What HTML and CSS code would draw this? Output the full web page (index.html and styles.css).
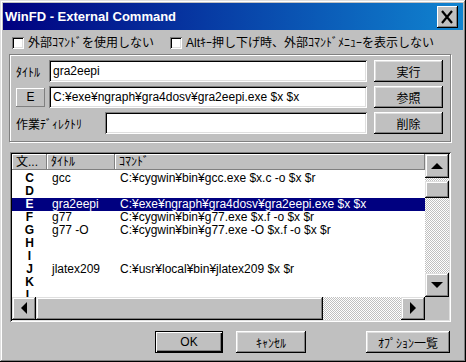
FILE: index.html
```html
<!DOCTYPE html>
<html lang="ja">
<head>
    <meta charset="UTF-8">
    <title>WinFD - External Command</title>
    <link rel="stylesheet" href="styles.css">
</head>
<body>
    <div class="window">
        <div class="titlebar">
            <span class="title">WinFD - External Command</span>
            <span class="close">
                <svg width="21" height="22" viewBox="0 0 21 22"><path d="M5 5 L15 17 M15 5 L5 17" stroke="#000" stroke-width="2.2" fill="none"/></svg>
            </span>
        </div>

        <div class="options">
            <label class="check"><span class="box"></span>外部ｺﾏﾝﾄﾞを使用しない</label>
            <label class="check"><span class="box"></span>Altｷｰ押し下げ時、外部ｺﾏﾝﾄﾞﾒﾆｭｰを表示しない</label>
        </div>

        <div class="group">
            <div class="field">
                <span class="label label-title">ﾀｲﾄﾙ</span>
                <div class="input">gra2eepi</div>
                <button class="btn">実行</button>
            </div>
            <div class="field">
                <span class="key">E</span>
                <div class="input">C:¥exe¥ngraph¥gra4dosv¥gra2eepi.exe $x $x</div>
                <button class="btn">参照</button>
            </div>
            <div class="field">
                <span class="label label-dir">作業ﾃﾞｨﾚｸﾄﾘ</span>
                <div class="input"></div>
                <button class="btn">削除</button>
            </div>
        </div>

        <div class="list">
            <div class="view">
                <div class="header">
                    <span class="head">文...</span>
                    <span class="head">ﾀｲﾄﾙ</span>
                    <span class="head">ｺﾏﾝﾄﾞ</span>
                </div>
                <div class="rows">
                    <div class="row"><span class="key-col">C</span><span>gcc</span><span>C:¥cygwin¥bin¥gcc.exe $x.c -o $x $r</span></div>
                    <div class="row"><span class="key-col">D</span><span></span><span></span></div>
                    <div class="row selected"><span class="key-col">E</span><span>gra2eepi</span><span>C:¥exe¥ngraph¥gra4dosv¥gra2eepi.exe $x $x</span></div>
                    <div class="row"><span class="key-col">F</span><span>g77</span><span>C:¥cygwin¥bin¥g77.exe $x.f -o $x $r</span></div>
                    <div class="row"><span class="key-col">G</span><span>g77 -O</span><span>C:¥cygwin¥bin¥g77.exe -O $x.f -o $x $r</span></div>
                    <div class="row"><span class="key-col">H</span><span></span><span></span></div>
                    <div class="row"><span class="key-col">I</span><span></span><span></span></div>
                    <div class="row"><span class="key-col">J</span><span>jlatex209</span><span>C:¥usr¥local¥bin¥jlatex209 $x $r</span></div>
                    <div class="row"><span class="key-col">K</span><span></span><span></span></div>
                    <div class="row"><span class="key-col">L</span><span></span><span></span></div>
                </div>
            </div>
            <div class="vscroll">
                <span class="arrow"><svg width="24" height="24"><polygon points="6,15 18,15 12,9"/></svg></span>
                <span class="thumb vthumb"></span>
                <span class="track"></span>
                <span class="arrow"><svg width="24" height="24"><polygon points="6,9 18,9 12,15"/></svg></span>
            </div>
            <div class="hscroll">
                <span class="arrow"><svg width="24" height="23"><polygon points="15,5 15,17 9,11"/></svg></span>
                <span class="thumb hthumb"></span>
                <span class="track"></span>
                <span class="arrow"><svg width="24" height="23"><polygon points="9,5 9,17 15,11"/></svg></span>
            </div>
            <div class="corner"></div>
        </div>

        <div class="footer">
            <button class="btn btn-ok default">OK</button>
            <button class="btn btn-cancel">ｷｬﾝｾﾙ</button>
            <button class="btn btn-options">ｵﾌﾟｼｮﾝ一覧</button>
        </div>
    </div>
</body>
</html>
```

FILE: styles.css
```css
* {
    box-sizing: border-box;
}
body {
    margin: 0;
    background: #c0c0c0;
    font-family: "Liberation Sans", "Noto Sans CJK JP", sans-serif;
    font-size: 12px;
    color: #000;
}
.window {
    width: 466px;
    height: 362px;
    padding: 3px;
    background: #c0c0c0;
    box-shadow: inset -1px -1px #000, inset 1px 1px #dfdfdf, inset -2px -2px #808080, inset 2px 2px #fff;
}
.titlebar {
    height: 27px;
    display: flex;
    align-items: center;
    justify-content: space-between;
    padding: 0 5px 0 2px;
    background: linear-gradient(to right, #000080, #1084d0);
}
.title {
    color: #fff;
    font-weight: bold;
    font-size: 13px;
}
.close {
    width: 21px;
    height: 22px;
    display: flex;
    background: #c0c0c0;
    box-shadow: inset -1px -1px #000, inset 1px 1px #fff, inset -2px -2px #808080;
}

/* checkboxes */
.options {
    display: flex;
    align-items: center;
    height: 12px;
    margin: 7px 0 0 9px;
    line-height: 12px;
}
.check {
    display: flex;
    align-items: center;
    gap: 4px;
    margin-right: 16px;
    white-space: nowrap;
}
.box {
    width: 12px;
    height: 12px;
    background: #fff;
    box-shadow: inset 1px 1px #808080, inset -1px -1px #fff, inset 2px 2px #000, inset -2px -2px #dfdfdf;
}

/* edit group */
.group {
    width: 442px;
    height: 88px;
    margin: 5px 0 0 6px;
    padding: 5px 7px 0 6px;
    border: 1px solid #808080;
    box-shadow: inset 1px 1px #fff, 1px 1px #fff;
}
.field {
    display: flex;
    align-items: center;
    height: 22px;
    margin-bottom: 4px;
}
.label {
    flex: none;
    white-space: nowrap;
}
.label-title {
    width: 33px;
}
.label-dir {
    width: 89px;
}
.key {
    width: 29px;
    height: 19px;
    margin-right: 4px;
    display: flex;
    align-items: center;
    justify-content: center;
    box-shadow: inset -1px -1px #808080, inset 1px 1px #fff;
}
.input {
    flex: 1;
    height: 22px;
    margin-right: 7px;
    padding-left: 4px;
    display: flex;
    align-items: center;
    background: #fff;
    white-space: nowrap;
    box-shadow: inset 1px 1px #808080, inset -1px -1px #fff, inset 2px 2px #000, inset -2px -2px #dfdfdf;
}
.btn {
    width: 69px;
    height: 22px;
    border: none;
    padding: 0;
    background: #c0c0c0;
    font: inherit;
    color: #000;
    box-shadow: inset -1px -1px #000, inset 1px 1px #fff, inset -2px -2px #808080, inset 2px 2px #dfdfdf;
}

/* list */
.list {
    width: 441px;
    height: 170px;
    margin: 10px 0 0 7px;
    padding: 2px;
    display: grid;
    grid-template-columns: 1fr 24px;
    grid-template-rows: 1fr 23px;
    box-shadow: inset 1px 1px #808080, inset -1px -1px #fff, inset 2px 2px #000, inset -2px -2px #dfdfdf;
}
.view {
    background: #fff;
    overflow: hidden;
}
.header,
.row {
    display: grid;
    grid-template-columns: 35px 68px 1fr;
}
.head {
    height: 16px;
    line-height: 16px;
    padding-left: 4px;
    background: #c0c0c0;
    white-space: nowrap;
    box-shadow: inset -1px -1px #808080, inset 1px 1px #fff;
}
.rows {
    padding-top: 2px;
}
.row {
    height: 13px;
    line-height: 13px;
    white-space: nowrap;
}
.row span {
    padding-left: 5px;
    overflow: hidden;
}
.row .key-col {
    padding-left: 0;
    text-align: center;
    font-weight: bold;
}
.selected {
    background: #000080;
    color: #fff;
}

/* scrollbars */
.vscroll,
.hscroll {
    display: flex;
    background: repeating-conic-gradient(#c0c0c0 0% 25%, #fff 0% 50%) 0 0 / 2px 2px;
}
.vscroll {
    flex-direction: column;
}
.arrow {
    display: flex;
    flex: none;
    background: #c0c0c0;
    box-shadow: inset -1px -1px #000, inset 1px 1px #dfdfdf, inset -2px -2px #808080, inset 2px 2px #fff;
}
.thumb {
    flex: none;
    background: #c0c0c0;
    box-shadow: inset -1px -1px #000, inset 1px 1px #dfdfdf, inset -2px -2px #808080, inset 2px 2px #fff;
}
.vthumb {
    height: 17px;
    margin-top: 3px;
}
.hthumb {
    width: 287px;
}
.track {
    flex: 1;
}
.corner {
    background: #c0c0c0;
}

/* bottom buttons */
.footer {
    display: flex;
    margin-top: 9px;
    padding: 0 13px 0 152px;
    gap: 13px;
}
.btn-ok {
    width: 68px;
}
.btn-cancel {
    width: 70px;
}
.btn-options {
    width: 84px;
    margin-left: auto;
}
.default {
    box-shadow: inset 0 0 0 1px #000, inset 2px 2px #fff, inset -2px -2px #000, inset -3px -3px #808080;
}
```
